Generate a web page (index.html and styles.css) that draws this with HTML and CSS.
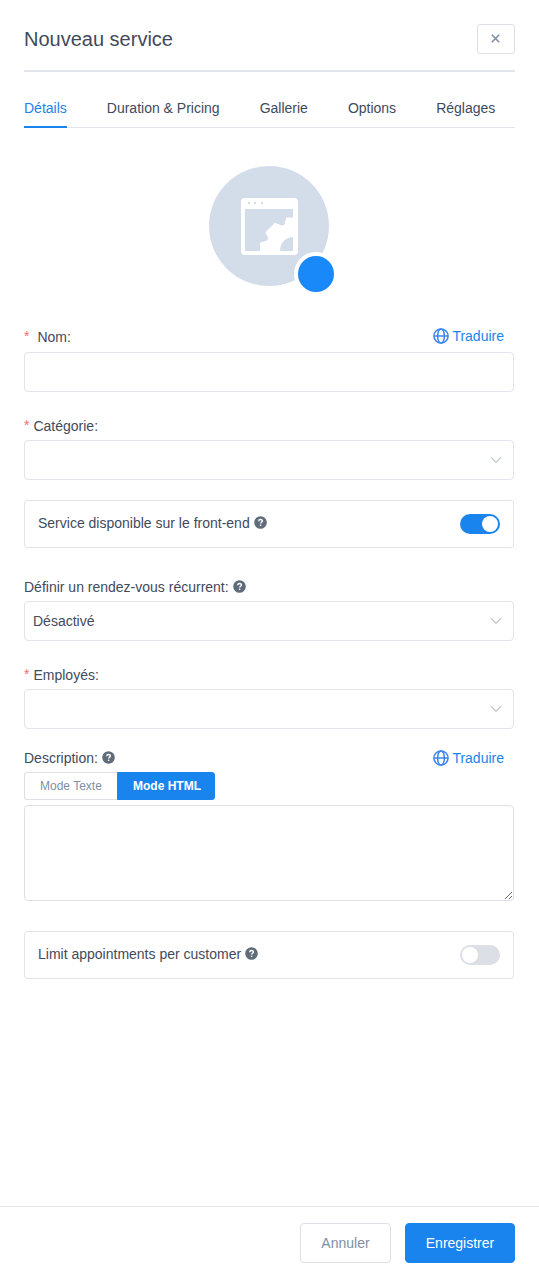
FILE: index.html
```html
<!DOCTYPE html>
<html lang="fr">
<head>
<meta charset="utf-8">
<title>Nouveau service</title>
<link rel="stylesheet" href="styles.css">
</head>
<body>
<svg class="defs" width="0" height="0" aria-hidden="true">
  <symbol id="globe" viewBox="0 0 16 16"><g fill="none" stroke="currentColor" stroke-width="1.5"><circle cx="8" cy="8" r="7.1"/><ellipse cx="8" cy="8" rx="3.4" ry="7.1"/><path d="M1 8h14"/></g></symbol>
  <symbol id="help" viewBox="0 0 13 13"><circle cx="6.5" cy="6.5" r="6.3" fill="#606c7a"/><path d="M4.7 5.2C4.7 2.9 8.4 3 8.4 5 8.4 6.3 6.6 6.2 6.6 7.6" fill="none" stroke="#fff" stroke-width="1.4"/><path d="M5.9 8.6h1.4V10H5.9z" fill="#fff"/></symbol>
  <symbol id="chevron" viewBox="0 0 12 8"><path d="M1 1.2 6 6.3l5-5.1" fill="none" stroke="#c0c4cc" stroke-width="1.2"/></symbol>
</svg>
<main class="dialog">
  <header class="header">
    <h1 class="title">Nouveau service</h1>
    <button class="close" aria-label="Fermer"><svg width="9" height="9" viewBox="0 0 9 9"><path d="m.8.8 7.4 7.4M8.200.8.8 8.200" stroke="#7f8fa4" stroke-width="1.6"/></svg></button>
  </header>
  <nav class="tabs">
    <a class="tab active">Détails</a><a class="tab">Duration &amp; Pricing</a><a class="tab">Gallerie</a><a class="tab">Options</a><a class="tab">Réglages</a>
  </nav>
  <div class="picture">
    <svg width="120" height="120" viewBox="0 0 120 120">
      <circle cx="60" cy="60" r="60" fill="#d3dde9"/>
      <rect x="32" y="32" width="57" height="57" rx="4" fill="#fff"/>
      <path d="M36 43h48v8.600h-6.700l-1.800 6.700q-1.200 1.800-3.400 1L66 56.700 56.300 66.300l2.700 5.200q.6 3-2.500 3.500L51 76.800V85H36z" fill="#d3dde9"/>
      <path d="M84 71v14H71c0-8 5-13.500 13-14z" fill="#d3dde9"/>
      <path d="M39 36h2v2h-2zM45 36h2v2h-2zM52 36h2v2h-2z" fill="#d3dde9"/>
    </svg>
    <span class="picture-badge"></span>
  </div>
  <form class="form">
    <div class="field name">
      <div class="label-row"><label class="label wide"><i>*</i>Nom:</label><a class="translate"><svg class="globe"><use href="#globe"/></svg>Traduire</a></div>
      <div class="input"></div>
    </div>
    <div class="field category">
      <div class="label-row"><label class="label"><i>*</i>Catégorie:</label></div>
      <div class="input"><svg class="chevron"><use href="#chevron"/></svg></div>
    </div>
    <div class="box">
      <span class="label">Service disponible sur le front-end<svg class="help"><use href="#help"/></svg></span>
      <span class="switch on"></span>
    </div>
    <div class="field recurring">
      <div class="label-row"><label class="label">Définir un rendez-vous récurrent:<svg class="help"><use href="#help"/></svg></label></div>
      <div class="input">Désactivé<svg class="chevron"><use href="#chevron"/></svg></div>
    </div>
    <div class="field employees">
      <div class="label-row"><label class="label"><i>*</i>Employés:</label></div>
      <div class="input"><svg class="chevron"><use href="#chevron"/></svg></div>
    </div>
    <div class="field description">
      <div class="label-row"><label class="label">Description:<svg class="help"><use href="#help"/></svg></label><a class="translate"><svg class="globe"><use href="#globe"/></svg>Traduire</a></div>
      <div class="modes"><span class="mode">Mode Texte</span><span class="mode selected">Mode HTML</span></div>
      <textarea class="textarea"></textarea>
    </div>
    <div class="box limit">
      <span class="label">Limit appointments per customer<svg class="help"><use href="#help"/></svg></span>
      <span class="switch"></span>
    </div>
  </form>
  <footer class="footer">
    <button class="button">Annuler</button>
    <button class="button primary">Enregistrer</button>
  </footer>
</main>
</body>
</html>
```
FILE: styles.css
```css
* { box-sizing: border-box; }
body { margin: 0; background: #fff; color: #3f4a5c; font: 14px/20px "Liberation Sans", Arial, sans-serif; }
.defs { display: block; }
svg { flex: none; }
button { font: inherit; padding: 0; background: #fff; }
.dialog { height: 1279px; display: flex; flex-direction: column; }
.header { margin: 0 24px; height: 72px; padding-top: 24px; display: flex; justify-content: space-between; align-items: flex-start; border-bottom: 2px solid #e2e6ec; }
.title { margin: 0; font-size: 20px; line-height: 30px; font-weight: 400; }
.close { width: 38px; height: 30px; border: 1px solid #dcdfe6; border-radius: 3px; display: flex; align-items: center; justify-content: center; padding: 0 1px 1px 0; }
.tabs { margin: 16px 24px 0; height: 40px; display: flex; gap: 40px; border-bottom: 1px solid #e2e5ec; }
.tab { height: 40px; line-height: 40px; white-space: nowrap; }
.tab.active { color: #1a84ee; border-bottom: 2px solid #1a84ee; }
.picture { position: relative; width: 120px; height: 120px; margin: 38px 0 0 209px; }
.picture svg { display: block; }
.picture-badge { position: absolute; left: 85px; top: 86px; width: 44px; height: 44px; border: 4px solid #fff; border-radius: 50%; background: #1989fa; }
.form { flex: 1; width: 490px; margin: 40px 0 0 24px; }
.label-row { display: flex; justify-content: space-between; height: 24px; padding-right: 10px; }
.label { display: flex; align-items: center; height: 20px; white-space: nowrap; }
.label i { font-style: normal; color: #f56c6c; margin: -2px 4px 0 0; }
.label.wide { height: 22px; }
.label.wide i { margin-right: 8px; margin-top: -3px; }
.translate { display: flex; align-items: center; height: 20px; gap: 3px; color: #1a84ee; }
.globe { width: 16px; height: 16px; color: #3c85ed; }
.help { width: 13px; height: 13px; margin: -1px 0 0 4px; }
.input { height: 40px; border: 1px solid #e2e4ec; border-radius: 4px; padding: 0 11px 0 8px; display: flex; align-items: center; }
.chevron { width: 12px; height: 8px; margin-left: auto; }
.name .label-row { height: 26px; }
.category { margin-top: 24px; }
.box { margin-top: 20px; height: 48px; border: 1px solid #e2e4ec; border-radius: 3px; padding: 0 13px; display: flex; align-items: center; justify-content: space-between; }
.box .label { margin-top: -2px; }
.switch { width: 40px; height: 20px; border-radius: 10px; padding: 2px; background: #dcdfe6; display: flex; }
.switch::before { content: ""; width: 16px; height: 16px; border-radius: 50%; background: #fff; }
.switch.on { background: #1a84ee; justify-content: flex-end; }
.recurring { margin-top: 29px; }
.employees { margin-top: 24px; }
.description { margin-top: 19px; }
.modes { display: flex; font-size: 12px; line-height: 26px; }
.mode { width: 94px; height: 28px; padding-left: 15px; border: 1px solid #dcdfe6; border-radius: 3px 0 0 3px; border-right: 0; color: #7f8fa4; }
.mode.selected { width: 98px; margin-left: -1px; border: 1px solid #1a84ee; border-radius: 0 3px 3px 0; background: #1a84ee; color: #fff; font-weight: 700; }
.textarea { display: block; width: 100%; height: 96px; margin-top: 5px; border: 1px solid #dcdfe6; border-radius: 4px; resize: vertical; background: #fff; }
.limit { margin-top: 30px; }
.footer { height: 73px; border-top: 1px solid #e2e5ec; padding: 16px 24px; display: flex; justify-content: flex-end; gap: 14px; }
.button { width: 91px; height: 40px; border: 1px solid #dcdfe6; border-radius: 4px; color: #7f8fa4; }
.button.primary { width: 110px; background: #1a84ee; border-color: #1a84ee; color: #fff; }
```
